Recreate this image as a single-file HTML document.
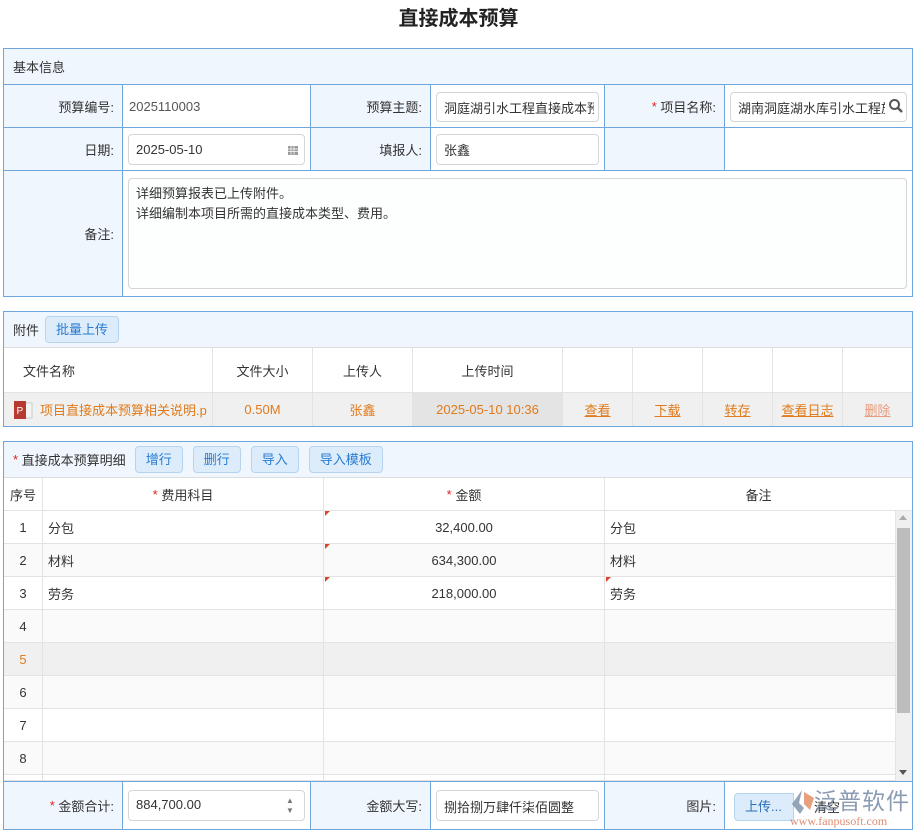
<!DOCTYPE html>
<html><head><meta charset="utf-8"><style>
*{box-sizing:border-box;margin:0;padding:0}
body{width:917px;height:833px;background:#fff;font-family:"Liberation Sans","Noto Sans CJK SC",sans-serif;font-size:13px;color:#333;position:relative;overflow:hidden}
.a{position:absolute}
.t{position:absolute;left:0;width:917px;top:2px;text-align:center;font-size:20px;font-weight:bold;color:#222}
.box{position:absolute;border:1px solid #6fa6dc}
.lb{position:absolute;background:#f0f6fe;border-right:1px solid #6fa6dc;border-bottom:1px solid #6fa6dc;text-align:right;padding-right:8px;display:flex;align-items:center;justify-content:flex-end}
.vl{position:absolute;background:#fff;border-right:1px solid #6fa6dc;border-bottom:1px solid #6fa6dc}
.inp{position:absolute;border:1px solid #d6d6d6;border-radius:4px;background:#fff;padding-left:7px;display:flex;align-items:center;white-space:nowrap;overflow:hidden;color:#333}
.inp span{overflow:hidden;display:block}
.hd{position:absolute;background:#f0f6fe;display:flex;align-items:center;padding-left:9px;border-bottom:1px solid #ddd}
.btn{display:inline-block;background:#dcecfb;border:1px solid #b7d4ef;border-radius:4px;color:#2a7cd0;height:27px;line-height:25px;padding:0 10px;margin-left:6px}
.c{position:absolute;display:flex;align-items:center;justify-content:center;border-right:1px solid #e3e3e3;border-bottom:1px solid #e3e3e3}
.or{color:#e07a1a}
.u{text-decoration:underline}
.r{color:#e0201a}
.tri{position:absolute;width:0;height:0;border-top:5px solid #d9452a;border-right:5px solid transparent}
</style></head><body>
<div class="t">直接成本预算</div>

<div class="box" style="left:3px;top:48px;width:910px;height:249px"></div>
<div class="hd" style="left:4px;top:49px;width:908px;height:36px;border-bottom:1px solid #6fa6dc">基本信息</div>
<div class="lb" style="left:4px;top:85px;width:119px;height:43px">预算编号:</div>
<div class="vl" style="left:123px;top:85px;width:188px;height:43px;padding-left:6px;line-height:43px;color:#555">2025110003</div>
<div class="lb" style="left:311px;top:85px;width:120px;height:43px">预算主题:</div>
<div class="vl" style="left:431px;top:85px;width:174px;height:43px"></div>
<div class="inp" style="left:436px;top:92px;width:163px;height:30px"><span style="width:150px">洞庭湖引水工程直接成本预</span></div>
<div class="lb" style="left:605px;top:85px;width:120px;height:43px"><span class="r">*</span>&nbsp;项目名称:</div>
<div class="vl" style="left:725px;top:85px;width:187px;height:43px;border-right:none"></div>
<div class="inp" style="left:730px;top:92px;width:177px;height:30px"><span style="width:147px">湖南洞庭湖水库引水工程施</span></div>
<svg class="a" style="left:888px;top:98px" width="16" height="16" viewBox="0 0 16 16"><circle cx="6.5" cy="6.5" r="4.5" fill="none" stroke="#555" stroke-width="2"/><path d="M10 10l4 4" stroke="#555" stroke-width="2.4"/></svg>

<div class="lb" style="left:4px;top:128px;width:119px;height:43px">日期:</div>
<div class="vl" style="left:123px;top:128px;width:188px;height:43px"></div>
<div class="inp" style="left:128px;top:134px;width:177px;height:31px">2025-05-10</div>
<svg class="a" style="left:287px;top:144px" width="12" height="12"><rect x="1" y="2" width="10" height="9" fill="#999"/><path d="M1 5h10M1 7.5h10M4 2v9M7 2v9" stroke="#fff" stroke-width=".7"/></svg>
<div class="lb" style="left:311px;top:128px;width:120px;height:43px">填报人:</div>
<div class="vl" style="left:431px;top:128px;width:174px;height:43px"></div>
<div class="inp" style="left:436px;top:134px;width:163px;height:31px">张鑫</div>
<div class="lb" style="left:605px;top:128px;width:120px;height:43px"></div>
<div class="vl" style="left:725px;top:128px;width:187px;height:43px;border-right:none"></div>

<div class="lb" style="left:4px;top:171px;width:119px;height:125px;border-bottom:none">备注:</div>
<div class="inp" style="left:128px;top:178px;width:779px;height:111px;align-items:flex-start;padding-top:5px;line-height:20px;white-space:normal;display:block;background:#fdfefe">详细预算报表已上传附件。<br>详细编制本项目所需的直接成本类型、费用。</div>

<div class="box" style="left:3px;top:311px;width:910px;height:116px"></div>
<div class="hd" style="left:4px;top:312px;width:908px;height:36px">附件<span class="btn" style="height:27px">批量上传</span></div>
<div class="c" style="left:4px;top:348px;width:209px;height:45px;justify-content:flex-start;padding-left:19px">文件名称</div>
<div class="c" style="left:213px;top:348px;width:100px;height:45px">文件大小</div>
<div class="c" style="left:313px;top:348px;width:100px;height:45px">上传人</div>
<div class="c" style="left:413px;top:348px;width:150px;height:45px">上传时间</div>
<div class="c" style="left:563px;top:348px;width:70px;height:45px"></div>
<div class="c" style="left:633px;top:348px;width:70px;height:45px"></div>
<div class="c" style="left:703px;top:348px;width:70px;height:45px"></div>
<div class="c" style="left:773px;top:348px;width:70px;height:45px"></div>
<div class="c" style="left:843px;top:348px;width:69px;height:45px;border-right:none"></div>
<div class="c or" style="left:4px;top:393px;width:209px;height:33px;background:#f0f0f0;justify-content:flex-start;padding-left:9px;white-space:nowrap;overflow:hidden;border-bottom:none"><svg width="20" height="20" viewBox="0 0 20 20" style="margin-right:7px;flex:none"><rect x="6" y="3" width="13" height="15" fill="#f4f4f4" stroke="#ccc"/><rect x="1" y="1" width="12" height="18" fill="#b73a30"/><text x="3.5" y="14" font-size="10" fill="#fff" font-family="Liberation Sans">P</text></svg>项目直接成本预算相关说明.p</div>
<div class="c or" style="left:213px;top:393px;width:100px;height:33px;background:#f0f0f0;border-bottom:none">0.50M</div>
<div class="c or" style="left:313px;top:393px;width:100px;height:33px;background:#f0f0f0;border-bottom:none">张鑫</div>
<div class="c or" style="left:413px;top:393px;width:150px;height:33px;background:#e4e4e4;border-bottom:none">2025-05-10 10:36</div>
<div class="c or u" style="left:563px;top:393px;width:70px;height:33px;background:#f0f0f0;border-bottom:none">查看</div>
<div class="c or u" style="left:633px;top:393px;width:70px;height:33px;background:#f0f0f0;border-bottom:none">下载</div>
<div class="c or u" style="left:703px;top:393px;width:70px;height:33px;background:#f0f0f0;border-bottom:none">转存</div>
<div class="c or u" style="left:773px;top:393px;width:70px;height:33px;background:#f0f0f0;border-bottom:none">查看日志</div>
<div class="c or u" style="left:843px;top:393px;width:69px;height:33px;background:#f0f0f0;border:none;color:#e89a7a">删除</div>

<div class="box" style="left:3px;top:441px;width:910px;height:389px"></div>
<div class="hd" style="left:4px;top:442px;width:908px;height:36px"><span class="r">*</span>&nbsp;直接成本预算明细<span class="btn" style="margin-left:9px">增行</span><span class="btn" style="margin-left:10px">删行</span><span class="btn" style="margin-left:10px">导入</span><span class="btn" style="margin-left:10px">导入模板</span></div>
<div class="c" style="left:4px;top:478px;width:39px;height:33px">序号</div>
<div class="c" style="left:43px;top:478px;width:281px;height:33px"><span class="r">*</span>&nbsp;费用科目</div>
<div class="c" style="left:324px;top:478px;width:281px;height:33px"><span class="r">*</span>&nbsp;金额</div>
<div class="c" style="left:605px;top:478px;width:307px;height:33px;border-right:none">备注</div>

<div id="rows"></div>
<script>
var d=[["1","分包","32,400.00","分包"],["2","材料","634,300.00","材料"],["3","劳务","218,000.00","劳务"],["4","","",""],["5","","",""],["6","","",""],["7","","",""],["8","","",""],["","","",""]];
var h="";
for(var i=0;i<9;i++){var y=511+i*33;var bg=i==4?"#f0f0f0":(i%2?"#fafafa":"#fff");var hh=i==8?(781-y):33;
h+='<div class="c" style="left:4px;top:'+y+'px;width:39px;height:'+hh+'px;background:'+bg+(i==4?';color:#e07a1a':'')+'">'+d[i][0]+'</div>';
h+='<div class="c" style="left:43px;top:'+y+'px;width:281px;height:'+hh+'px;background:'+bg+';justify-content:flex-start;padding-left:5px">'+d[i][1]+'</div>';
h+='<div class="c" style="left:324px;top:'+y+'px;width:281px;height:'+hh+'px;background:'+bg+'">'+d[i][2]+'</div>';
h+='<div class="c" style="left:605px;top:'+y+'px;width:291px;height:'+hh+'px;background:'+bg+';justify-content:flex-start;padding-left:5px">'+d[i][3]+'</div>';
if(i<3){h+='<div class="tri" style="left:325px;top:'+y+'px"></div>';if(i==2)h+='<div class="tri" style="left:606px;top:'+y+'px"></div>';}
}
document.getElementById("rows").innerHTML=h;
</script>
<div class="a" style="left:896px;top:511px;width:16px;height:270px;background:#f0f0f0"></div>
<div class="a" style="left:897px;top:528px;width:13px;height:185px;background:#bdbdbd"></div>
<div class="a" style="left:899px;top:515px;border-left:4px solid transparent;border-right:4px solid transparent;border-bottom:5px solid #aaa"></div>
<div class="a" style="left:899px;top:770px;border-left:4px solid transparent;border-right:4px solid transparent;border-top:5px solid #555"></div>

<div class="a" style="left:4px;top:781px;width:908px;height:1px;background:#6fa6dc"></div>
<div class="lb" style="left:4px;top:782px;width:119px;height:47px;border-bottom:none"><span class="r">*</span>&nbsp;金额合计:</div>
<div class="vl" style="left:123px;top:782px;width:188px;height:47px;border-bottom:none"></div>
<div class="inp" style="left:128px;top:790px;width:177px;height:31px;align-items:flex-start;padding-top:6px">884,700.00</div>
<div class="a" style="left:286px;top:796px;font-size:8px;color:#777;line-height:10px">▲<br>▼</div>
<div class="lb" style="left:311px;top:782px;width:120px;height:47px;border-bottom:none">金额大写:</div>
<div class="vl" style="left:431px;top:782px;width:174px;height:47px;border-bottom:none"></div>
<div class="inp" style="left:436px;top:790px;width:163px;height:31px;align-items:flex-start;padding-top:6px">捌拾捌万肆仟柒佰圆整</div>
<div class="lb" style="left:605px;top:782px;width:120px;height:47px;border-bottom:none">图片:</div>
<div class="vl" style="left:725px;top:782px;width:187px;height:47px;border:none"></div>
<div class="a" style="left:734px;top:793px;width:60px;height:28px;background:#dcecfb;border:1px solid #b7d4ef;border-radius:4px 0 0 4px;color:#2a6cb0;line-height:26px;padding-left:10px">上传...</div>
<div class="a" style="left:814px;top:797px;color:#333">清空</div>
<svg class="a" style="left:790px;top:788px" width="26" height="28" viewBox="0 0 26 28"><path d="M12 2 L2 16 L10 26 L14 20 L9 15 Z" fill="#7a8ea6" opacity=".8"/><path d="M14 4 L24 10 L20 22 L14 16 Z" fill="#e08050" opacity=".75"/></svg>
<div class="a" style="left:814px;top:786px;font-size:23px;color:#6d83a0;opacity:.8;letter-spacing:1px;font-family:'Noto Sans CJK SC',sans-serif;line-height:26px">泛普软件</div>
<div class="a" style="left:790px;top:814px;font-size:12px;color:#d77a5a;font-family:'Liberation Serif',serif;opacity:.85">www.fanpusoft.com</div>
</body></html>
